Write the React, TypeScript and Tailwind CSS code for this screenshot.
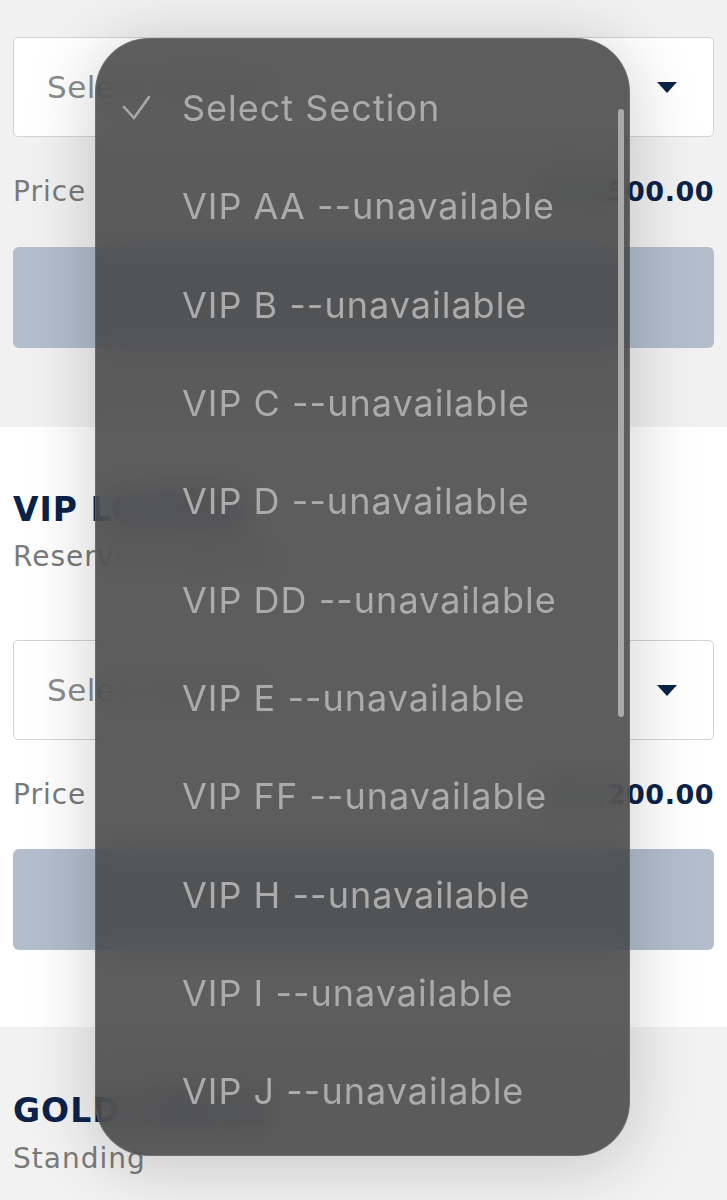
import React from 'react';

const OPTIONS = [
  'VIP AA',
  'VIP B',
  'VIP C',
  'VIP D',
  'VIP DD',
  'VIP E',
  'VIP FF',
  'VIP H',
  'VIP I',
  'VIP J',
];

function CaretDown() {
  return (
    <svg width="20" height="11" viewBox="0 0 20 11" aria-hidden="true">
      <path d="M0 0 H20 L10 11 Z" fill="#0b2249" />
    </svg>
  );
}

function SectionSelect() {
  return (
    <div className="flex h-[100px] items-center justify-between rounded-[5px] border border-[#d2d2d2] bg-white pl-[33px] pr-[36px]">
      <span className="text-[31px] tracking-[0.5px] text-[#8c8c8c]">Select Section</span>
      <CaretDown />
    </div>
  );
}

function PriceRow({ price }: { price: string }) {
  return (
    <div className="flex h-[36px] items-center justify-between">
      <span className="text-[28px] tracking-[1px] text-[#7a7a7a]">Price</span>
      <span className="text-[27px] font-bold tracking-[0.5px] text-[#0b2249]">{price}</span>
    </div>
  );
}

function BuyButton() {
  return <div className="h-[101px] rounded-[6px] bg-[#b3bdcc]" />;
}

function Check() {
  return (
    <svg width="30" height="26" viewBox="0 0 30 26" aria-hidden="true">
      <path
        d="M2 12 L12 23 L27 2"
        fill="none"
        stroke="#a9a9a9"
        strokeWidth="2.6"
        strokeLinecap="round"
        strokeLinejoin="round"
      />
    </svg>
  );
}

// native iOS picker sheet, drawn over the page
function PickerSheet() {
  return (
    <div
      className="absolute left-[95px] top-[38px] h-[1118px] w-[535px] overflow-hidden rounded-[54px] border border-white/10 bg-[rgba(62,62,62,0.84)] shadow-[0_8px_70px_rgba(0,0,0,0.2)] backdrop-blur-[18px]"
      style={{ fontFamily: 'Inter, "Liberation Sans", sans-serif' }}
    >
      <div className="pt-[20px]">
        <div className="flex h-[98.3px] items-center">
          <div className="flex w-[86px] justify-end pr-[30px]">
            <Check />
          </div>
          <span className="text-[36px] tracking-[1px] text-[#ababab]">Select Section</span>
        </div>
        {OPTIONS.map((o) => (
          <div key={o} className="flex h-[98.3px] items-center pl-[86px]">
            <span className="text-[36px] tracking-[1px] text-[#ababab]">{o} --unavailable</span>
          </div>
        ))}
      </div>
      <div className="absolute left-[522px] top-[70px] h-[608px] w-[6px] rounded-full bg-[#a9a9a9]" />
    </div>
  );
}

export default function App() {
  return (
    <div
      className="relative h-[1200px] overflow-hidden bg-[#f2f2f2]"
      style={{ fontFamily: '"DejaVu Sans", "Liberation Sans", sans-serif' }}
    >
      <section className="bg-[#f1f1f1] px-[13px] pb-[79px] pt-[37px]">
        <SectionSelect />
        <div className="mt-[37px]">
          <PriceRow price="R 1,500.00" />
        </div>
        <div className="mt-[37px]">
          <BuyButton />
        </div>
      </section>

      <section className="bg-white px-[13px] pb-[77px] pt-[63px]">
        <h2 className="text-[33px] font-bold leading-[40px] tracking-[1px] text-[#0b2249]">VIP LOUNGE</h2>
        <p className="mt-[10px] text-[28px] leading-[34px] tracking-[1px] text-[#7a7a7a]">Reserved Seating</p>
        <div className="mt-[66px]">
          <SectionSelect />
        </div>
        <div className="mt-[37px]">
          <PriceRow price="R 1,200.00" />
        </div>
        <div className="mt-[36px]">
          <BuyButton />
        </div>
      </section>

      <section className="bg-[#f2f2f2] px-[13px] pt-[64px]">
        <h2 className="text-[33px] font-bold leading-[40px] tracking-[1px] text-[#0b2249]">GOLD CIRCLE</h2>
        <p className="mt-[11px] text-[28px] leading-[34px] tracking-[1px] text-[#7a7a7a]">Standing</p>
      </section>

      <PickerSheet />
    </div>
  );
}
